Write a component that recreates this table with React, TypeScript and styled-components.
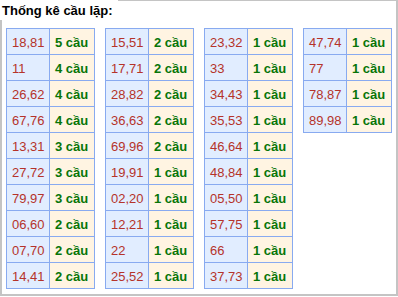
import React from "react";
import styled, { createGlobalStyle } from "styled-components";

const Global = createGlobalStyle`
  html, body { margin: 0; padding: 0; background: #ffffff; }
  body { font-family: "Liberation Sans", Arial, sans-serif; }
`;

const Box = styled.div`
  width: 398px;
  height: 296px;
  box-sizing: border-box;
  border: 2px solid #c4c4c4;
  border-top-width: 1px;
  display: flex;
  flex-direction: column;
  align-items: flex-start;
  background: #ffffff;
`;

const Title = styled.div`
  margin: -1px 0 0 -2px;
  padding: 3px 5px 2px 2px;
  background: #ffffff;
  font-size: 13px;
  line-height: 15px;
  font-weight: bold;
  color: #000000;
`;

const Tables = styled.div`
  display: flex;
  gap: 10px;
  padding-left: 4px;
  margin-top: 8px;
  align-items: flex-start;
`;

const Grid = styled.div`
  display: grid;
  grid-template-columns: 42px 44px;
  grid-auto-rows: 25px;
  gap: 1px;
  border: 1px solid #88aaf0;
  background: #88aaf0;
`;

const Cell = styled.div<{ $kind: "num" | "count" }>`
  display: flex;
  align-items: center;
  padding-left: 5px;
  padding-top: 1px;
  font-size: 13px;
  white-space: nowrap;
  background: ${(p) => (p.$kind === "num" ? "#e1edff" : "#fff4e2")};
  color: ${(p) => (p.$kind === "num" ? "#b5332a" : "#087508")};
  font-weight: ${(p) => (p.$kind === "num" ? "normal" : "bold")};
`;

const data: [string, number][][] = [
  [
    ["18,81", 5], ["11", 4], ["26,62", 4], ["67,76", 4], ["13,31", 3],
    ["27,72", 3], ["79,97", 3], ["06,60", 2], ["07,70", 2], ["14,41", 2],
  ],
  [
    ["15,51", 2], ["17,71", 2], ["28,82", 2], ["36,63", 2], ["69,96", 2],
    ["19,91", 1], ["02,20", 1], ["12,21", 1], ["22", 1], ["25,52", 1],
  ],
  [
    ["23,32", 1], ["33", 1], ["34,43", 1], ["35,53", 1], ["46,64", 1],
    ["48,84", 1], ["05,50", 1], ["57,75", 1], ["66", 1], ["37,73", 1],
  ],
  [["47,74", 1], ["77", 1], ["78,87", 1], ["89,98", 1]],
];

export default function App() {
  return (
    <>
      <Global />
      <Box>
        <Title>Thống kê cầu lặp:</Title>
        <Tables>
          {data.map((col, i) => (
            <Grid key={i}>
              {col.map(([n, c]) => (
                <React.Fragment key={n}>
                  <Cell $kind="num">{n}</Cell>
                  <Cell $kind="count">{c} cầu</Cell>
                </React.Fragment>
              ))}
            </Grid>
          ))}
        </Tables>
      </Box>
    </>
  );
}
